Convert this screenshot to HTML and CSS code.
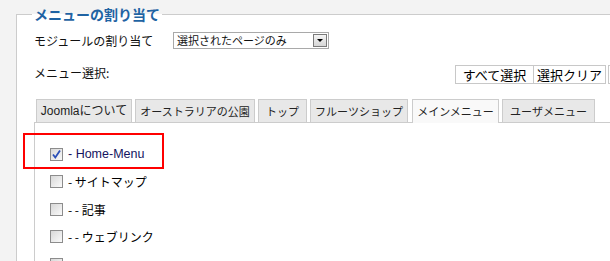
FILE: index.html
```html
<!DOCTYPE html>
<html lang="ja">
<head>
    <meta charset="UTF-8">
    <title>メニューの割り当て</title>
    <link rel="stylesheet" href="styles.css">
</head>
<body>
    <fieldset class="assign">
        <legend>メニューの割り当て</legend>

        <div class="row">
            <label class="row-label">モジュールの割り当て</label>
            <div class="select">
                <span class="select-text">選択されたページのみ</span>
                <span class="select-btn"><span class="arrow"></span></span>
            </div>
        </div>

        <div class="row row-menu">
            <label class="row-label">メニュー選択:</label>
            <div class="actions">
                <button class="btn btn-all">すべて選択</button>
                <button class="btn btn-clear">選択クリア</button>
                <button class="btn btn-cut"></button>
            </div>
        </div>

        <div class="tabs">
            <div class="tab">Joomlaについて</div>
            <div class="tab">オーストラリアの公園</div>
            <div class="tab">トップ</div>
            <div class="tab">フルーツショップ</div>
            <div class="tab active">メインメニュー</div>
            <div class="tab">ユーザメニュー</div>
        </div>

        <div class="panel">
            <div class="highlight"></div>
            <ul class="items">
                <li class="item checked">
                    <span class="check">
                        <svg width="11" height="11" viewBox="0 0 11 11"><path d="M2 5.5 L4.3 8.5 L9 1.5" fill="none" stroke="#2a4fb8" stroke-width="1.8"/></svg>
                    </span>
                    <span class="name">- Home-Menu</span>
                </li>
                <li class="item"><span class="check"></span><span class="name">- サイトマップ</span></li>
                <li class="item"><span class="check"></span><span class="name">- - 記事</span></li>
                <li class="item"><span class="check"></span><span class="name">- - ウェブリンク</span></li>
                <li class="item"><span class="check"></span><span class="name"></span></li>
            </ul>
        </div>
    </fieldset>
</body>
</html>
```

FILE: styles.css
```css
html, body {
    height: 261px;
    overflow: hidden;
}

body {
    margin: 0;
    padding-top: 5px;
    box-sizing: border-box;
    background: #f3f3f3;
    font-family: "Noto Sans CJK JP", "Liberation Sans", sans-serif;
    font-size: 12px;
    color: #111;
}

.assign {
    box-sizing: border-box;
    height: 256px;
    overflow: hidden;
    margin: 0 0 0 16px;
    padding: 0 0 0 17px;
    border: 1px solid #cccccc;
    border-right: none;
    border-bottom: none;
    background: #fff;
}

.assign legend {
    margin-left: -2px;
    padding: 0 2px;
    font-size: 14px;
    font-weight: bold;
    line-height: 18px;
    color: #1f63a3;
}

.row {
    display: flex;
    align-items: center;
}

.row:first-of-type {
    margin-top: 9px;
}

.row-label {
    flex: none;
    width: 139px;
    font-size: 12px;
}

.select {
    display: flex;
    align-items: center;
    justify-content: space-between;
    width: 151px;
    height: 15px;
    border: 1px solid #a9a9a9;
    padding-left: 3px;
}

.select-text {
    font-size: 11px;
    line-height: 15px;
}

.select-btn {
    display: flex;
    align-items: center;
    justify-content: center;
    width: 12px;
    height: 11px;
    margin-right: 1px;
    border: 1px solid #7a7a7a;
    background: linear-gradient(#f4f4f4, #d6d6d6);
}

.arrow {
    width: 0;
    height: 0;
    border-left: 3px solid transparent;
    border-right: 3px solid transparent;
    border-top: 3px solid #000;
}

.row-menu {
    margin-top: 16px;
    align-items: flex-start;
}

.row-menu .row-label {
    margin-top: -1px;
}

.actions {
    display: flex;
    flex: none;
    margin-left: 282px;
}

.btn {
    box-sizing: border-box;
    height: 19px;
    padding: 0;
    border: 1px solid #c8c8c8;
    background: #fff;
    font-family: "Noto Sans CJK JP", sans-serif;
    font-size: 13px;
    line-height: 15px;
    color: #000;
}

.btn-all { width: 79px; }

.btn-clear {
    width: 73px;
    margin-left: -1px;
}

.btn-cut {
    width: 10px;
    margin-left: 2px;
}

.tabs {
    display: flex;
    gap: 3px;
    margin-top: 15px;
    margin-left: 2px;
}

.tab {
    box-sizing: border-box;
    height: 23px;
    border: 1px solid #cccccc;
    border-bottom: none;
    background: #e8e8e8;
    font-size: 11px;
    line-height: 22px;
    text-align: center;
    color: #222;
    white-space: nowrap;
}

.tab:nth-child(1) { width: 96px; }
.tab:nth-child(2) { width: 120px; }
.tab:nth-child(3) { width: 49px; }
.tab:nth-child(4) { width: 98px; }
.tab:nth-child(5) { width: 87px; margin-left: 1px; }
.tab:nth-child(6) { width: 93px; }

.tab:first-child {
    font-family: "Liberation Sans", "Noto Sans CJK JP", sans-serif;
    font-size: 12px;
}

.tab.active {
    background: #f9f9f9;
    height: 24px;
    margin-bottom: -1px;
    position: relative;
    z-index: 1;
}

.panel {
    position: relative;
    border-top: 1px solid #cccccc;
    border-left: 1px solid #cccccc;
    min-height: 140px;
}

.highlight {
    position: absolute;
    left: -12px;
    top: 10px;
    width: 137px;
    height: 32px;
    border: 2px solid #ff0000;
}

.items {
    list-style: none;
    margin: 0;
    padding: 24px 0 0 15px;
}

.item {
    display: flex;
    align-items: center;
    height: 14px;
    margin-bottom: 13.5px;
}

.check {
    display: flex;
    align-items: center;
    justify-content: center;
    width: 11px;
    height: 11px;
    border: 1px solid #8c8c8c;
    background: linear-gradient(135deg, #d8d8d8, #fafafa);
    box-sizing: content-box;
}

.name {
    margin-left: 5px;
    font-size: 12px;
    color: #000;
}

.item.checked .name {
    font-family: "Liberation Sans", sans-serif;
    font-size: 12.5px;
    color: #141460;
}
```
